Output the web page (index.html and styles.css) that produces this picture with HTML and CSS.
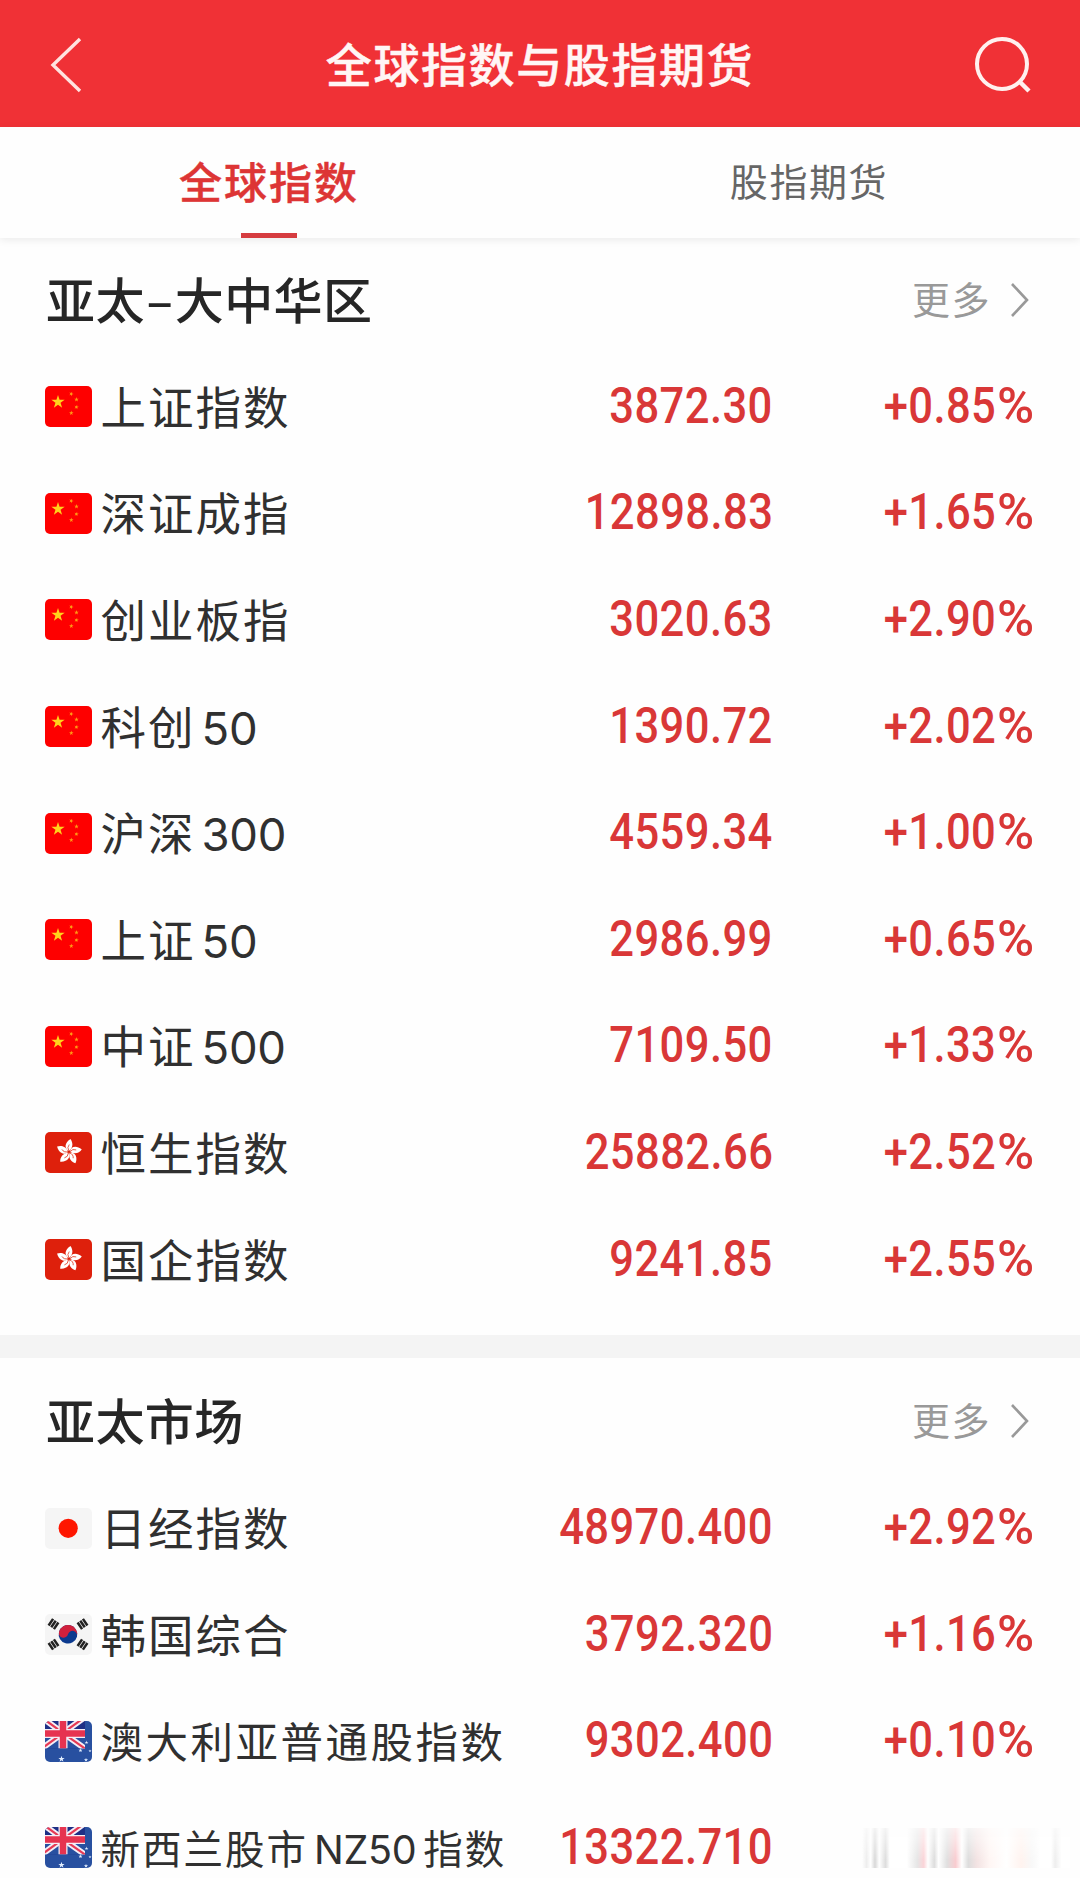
FILE: index.html
```
<!DOCTYPE html>
<html lang="zh-CN">
<head>
<meta charset="utf-8">
<title>全球指数与股指期货</title>
<link rel="stylesheet" href="styles.css">
</head>
<body>
<svg width="0" height="0" class="defs" aria-hidden="true">
  <defs>
    <polygon id="star" points="0,-1 .225,-.309 .951,-.309 .363,.118 .588,.809 0,.382 -.588,.809 -.363,.118 -.951,-.309 -.225,-.309"/>
    <clipPath id="round"><rect width="47" height="41" rx="5"/></clipPath>
    <symbol id="cn" viewBox="0 0 47 41">
      <rect width="47" height="41" rx="5" fill="#fe0000"/>
      <g fill="#ffd21c">
        <use href="#star" transform="translate(13 16) scale(7)"/>
        <g opacity=".75">
          <use href="#star" transform="translate(26.3 8) rotate(20) scale(2.4)"/>
          <use href="#star" transform="translate(31.5 13.5) scale(2.4)"/>
          <use href="#star" transform="translate(31.5 21) rotate(15) scale(2.4)"/>
          <use href="#star" transform="translate(26.3 27) scale(2.4)"/>
        </g>
      </g>
    </symbol>
    <g id="petal">
      <path d="M0 -1C-5 -3 -5 -9 1 -13C3.500 -10 4.500 -5 0 -1Z" fill="#fff"/>
      <path d="M0 -1Q-2.500 -4.500 0 -7.500" fill="none" stroke="#de2910" stroke-width=".7"/>
    </g>
    <symbol id="hk" viewBox="0 0 47 41">
      <rect width="47" height="41" rx="5" fill="#de200c"/>
      <g transform="translate(24 20)">
        <use href="#petal" transform="rotate(2)"/><use href="#petal" transform="rotate(74)"/><use href="#petal" transform="rotate(146)"/><use href="#petal" transform="rotate(218)"/><use href="#petal" transform="rotate(290)"/>
      </g>
    </symbol>
    <symbol id="jp" viewBox="0 0 47 41">
      <rect width="47" height="41" rx="5" fill="#f5f5f5"/>
      <circle cx="23.200" cy="20.300" r="9.600" fill="#fe1600"/>
    </symbol>
    <path id="bars" d="M-4 -3.200H4M-4 0H4M-4 3.200H4" stroke="#222" stroke-width="2.500"/>
    <symbol id="kr" viewBox="0 0 47 41">
      <rect width="47" height="41" rx="5" fill="#f5f5f5"/>
      <g transform="translate(23 20.300) rotate(15)">
        <circle r="9.300" fill="#0b3a8f"/>
        <path d="M-9.300 0A9.300 9.300 0 0 1 9.300 0A4.650 4.650 0 0 0 0 0A4.650 4.650 0 0 1 -9.300 0Z" fill="#d0203c"/>
      </g>
      <use href="#bars" transform="translate(8.500 10) rotate(-56)"/>
      <use href="#bars" transform="translate(37.500 10) rotate(56)"/>
      <use href="#bars" transform="translate(8.500 30.500) rotate(56)"/>
      <use href="#bars" transform="translate(37.500 30.500) rotate(-56)"/>
    </symbol>
    <symbol id="au" viewBox="0 0 47 41">
      <g clip-path="url(#round)">
        <rect width="47" height="41" fill="#2850a0"/>
        <svg width="40" height="27.500" viewBox="0 0 40 27.500">
          <rect width="40" height="27.500" fill="#1e2f86"/>
          <path d="M0 0H40V27.500H0Z" fill="#2850a0" clip-path="inset(14px 0 0 0)"/>
          <path d="M-4 -4L18 12L40 -4M-4 28L18 12L42 29" fill="none" stroke="#f4eef6" stroke-width="6"/>
          <path d="M-4 -4L18 12L40 -4M-4 28L18 12L42 29" fill="none" stroke="#e63a55" stroke-width="2.200"/>
          <path d="M18 0V27.500M0 12.500H40" stroke="#f4eef6" stroke-width="9"/>
          <path d="M18 0V27.500M0 12.500H40" stroke="#e63350" stroke-width="6.500"/>
        </svg>
        <g fill="#e3efff">
          <use href="#star" transform="translate(16.500 38) scale(3.300)"/>
          <use href="#star" transform="translate(35.500 29.500) scale(2.200)"/>
          <use href="#star" transform="translate(41.500 21.500) scale(2)"/>
          <use href="#star" transform="translate(45 30) scale(1.600)"/>
          <use href="#star" transform="translate(41 39) scale(2.200)"/>
        </g>
      </g>
    </symbol>
    <symbol id="chevron" viewBox="0 0 20 36"><path d="M2 2L17 18L2 34" fill="none" stroke="#999" stroke-width="2.600"/></symbol>
  </defs>
</svg>

<header class="topbar">
  <svg class="back" viewBox="0 0 34 58"><path d="M31 3L4 29L31 55" fill="none" stroke="#ffe3e0" stroke-width="3.400"/></svg>
  <h1 class="title">全球指数与股指期货</h1>
  <svg class="search" viewBox="0 0 58 58"><circle cx="28" cy="28" r="25" fill="none" stroke="#fff0ee" stroke-width="4"/><path d="M45 45L55 55" stroke="#fff0ee" stroke-width="4.500"/></svg>
</header>

<nav class="tabs">
  <a class="tab active">全球指数</a>
  <a class="tab">股指期货</a>
</nav>

<main>
  <section class="group">
    <div class="group-head"><h2>亚太<span class="dash">–</span>大中华区</h2><a class="more">更多<svg><use href="#chevron"/></svg></a></div>
    <div class="row"><svg class="flag"><use href="#cn"/></svg><span class="name">上证指数</span><span class="num">3872.30</span><span class="pct">+0.85<i>%</i></span></div>
    <div class="row"><svg class="flag"><use href="#cn"/></svg><span class="name">深证成指</span><span class="num">12898.83</span><span class="pct">+1.65<i>%</i></span></div>
    <div class="row"><svg class="flag"><use href="#cn"/></svg><span class="name">创业板指</span><span class="num">3020.63</span><span class="pct">+2.90<i>%</i></span></div>
    <div class="row"><svg class="flag"><use href="#cn"/></svg><span class="name">科创<span class="lat">50</span></span><span class="num">1390.72</span><span class="pct">+2.02<i>%</i></span></div>
    <div class="row"><svg class="flag"><use href="#cn"/></svg><span class="name">沪深<span class="lat">300</span></span><span class="num">4559.34</span><span class="pct">+1.00<i>%</i></span></div>
    <div class="row"><svg class="flag"><use href="#cn"/></svg><span class="name">上证<span class="lat">50</span></span><span class="num">2986.99</span><span class="pct">+0.65<i>%</i></span></div>
    <div class="row"><svg class="flag"><use href="#cn"/></svg><span class="name">中证<span class="lat">500</span></span><span class="num">7109.50</span><span class="pct">+1.33<i>%</i></span></div>
    <div class="row"><svg class="flag"><use href="#hk"/></svg><span class="name">恒生指数</span><span class="num">25882.66</span><span class="pct">+2.52<i>%</i></span></div>
    <div class="row"><svg class="flag"><use href="#hk"/></svg><span class="name">国企指数</span><span class="num">9241.85</span><span class="pct">+2.55<i>%</i></span></div>
  </section>
  <section class="group">
    <div class="group-head"><h2>亚太市场</h2><a class="more">更多<svg><use href="#chevron"/></svg></a></div>
    <div class="row"><svg class="flag"><use href="#jp"/></svg><span class="name">日经指数</span><span class="num">48970.400</span><span class="pct">+2.92<i>%</i></span></div>
    <div class="row"><svg class="flag"><use href="#kr"/></svg><span class="name">韩国综合</span><span class="num">3792.320</span><span class="pct">+1.16<i>%</i></span></div>
    <div class="row"><svg class="flag"><use href="#au"/></svg><span class="name mid">澳大利亚普通股指数</span><span class="num">9302.400</span><span class="pct">+0.10<i>%</i></span></div>
    <div class="row"><svg class="flag"><use href="#au"/></svg><span class="name small">新西兰股市<span class="lat">NZ50</span>指数</span><span class="num">13322.710</span><span class="smear"></span></div>
  </section>
</main>
</body>
</html>
```
FILE: styles.css
```
* { box-sizing: border-box; }
body {
  margin: 0;
  width: 1080px;
  height: 1878px;
  overflow: hidden;
  background: #fefefe;
  color: #303030;
  font-family: Inter, "Noto Sans CJK SC", sans-serif;
}
.defs { position: absolute; }
h1, h2 { margin: 0; font-weight: 500; }

.topbar {
  height: 127px;
  padding: 2px 48px 0 49px;
  background: #f03136;
  display: flex;
  align-items: center;
}
.back { width: 34px; height: 58px; }
.search { width: 58px; height: 58px; }
.title {
  flex: 1;
  padding: 0 0 5px 23px;
  text-align: center;
  color: #fff6f5;
  font: 500 46px/60px "Noto Sans CJK SC", sans-serif;
  letter-spacing: 1.600px;
  -webkit-text-stroke: .5px #fff6f5;
}

.tabs {
  height: 111px;
  display: flex;
  box-shadow: 0 2px 8px rgba(0, 0, 0, .08);
  background: #fefefe;
}
.tab {
  flex: 1;
  display: flex;
  flex-direction: column;
  align-items: center;
  justify-content: space-between;
  padding: 23px 2px 0 0;
  font: 400 38px/60px "Noto Sans CJK SC", sans-serif;
  letter-spacing: 1.600px;
  color: #666;
}
.tab.active {
  font-size: 43px;
  font-weight: 500;
  letter-spacing: 2px;
  color: #dd3535;
  -webkit-text-stroke: .4px #dd3535;
}
.tab.active::after { content: ""; width: 56px; height: 5px; background: #d63c40; }

.group { padding-bottom: 22px; }
.group + .group { border-top: 23px solid #f4f4f4; }
.group-head {
  height: 115.500px;
  padding: 5px 50px 0 46px;
  display: flex;
  align-items: center;
  justify-content: space-between;
}
.group + .group .group-head { height: 117px; padding-top: 6px; }
h2 {
  font: 500 49px/70px "Noto Sans CJK SC", sans-serif;
  letter-spacing: .400px;
  color: #262626;
}
.dash { display: inline-block; width: 30px; text-align: center; }
.more {
  display: flex;
  align-items: center;
  font: 400 38px/60px "Noto Sans CJK SC", sans-serif;
  letter-spacing: 1.500px;
  color: #999;
}
.more svg { width: 20px; height: 36px; margin: 4px 0 0 19px; }

.row {
  height: 106.600px;
  padding: 0 46px 0 45px;
  display: grid;
  grid-template-columns: 47px 1fr auto 261px;
  align-items: center;
}
.flag { width: 47px; height: 41px; }
.name {
  padding: 4px 0 0 8.500px;
  font: 400 45.500px/70px Inter, "Noto Sans CJK SC", sans-serif;
  letter-spacing: 2px;
  white-space: nowrap;
}
.name.mid { font-size: 42.500px; letter-spacing: 2.500px; }
.name.small { font-size: 39.500px; letter-spacing: 2px; }
.lat { margin: 0 10px 0 6px; letter-spacing: -.300px; }
.small .lat { margin: 0 7px 0 6px; }
.num, .pct {
  font: 500 49.500px/70px Roboto, sans-serif;
  letter-spacing: .450px;
  color: #d93737;
  transform: translateY(-1px) scaleX(.88);
  transform-origin: right center;
  text-align: right;
}
.num { margin-left: -60px; }
.pct i {
  display: inline-block;
  margin: 0 5px 0 1px;
  font-style: normal;
  transform: scaleX(1.160);
  transform-origin: left center;
}
.smear {
  justify-self: end;
  width: 212px;
  height: 40px;
  margin-right: -36px;
  background: linear-gradient(90deg, transparent 2%, #eee 4%, #fff 6%, #d8d8d8 8%, #fff 10%, #ddd 13%, #fff 15%, #fff 23%, #e6e6e6 28%, #fbd4d8 31%, #fff 33%, #ddd 36%, #fff 38%, #e0e0e0 42%, #f9ccd0 46%, #fff 49%, #ddd 52%, #f3e3e3 56%, #fff6f4 62%, #fff 70%, #fff3ef 77%, #f8f8f8 82%, #fff 86%, #fff 91%, #eee 93%, #fff 96%);
  -webkit-mask-image: linear-gradient(transparent, #000 80%);
  mask-image: linear-gradient(rgba(0, 0, 0, .3), #000 80%);
}
```
